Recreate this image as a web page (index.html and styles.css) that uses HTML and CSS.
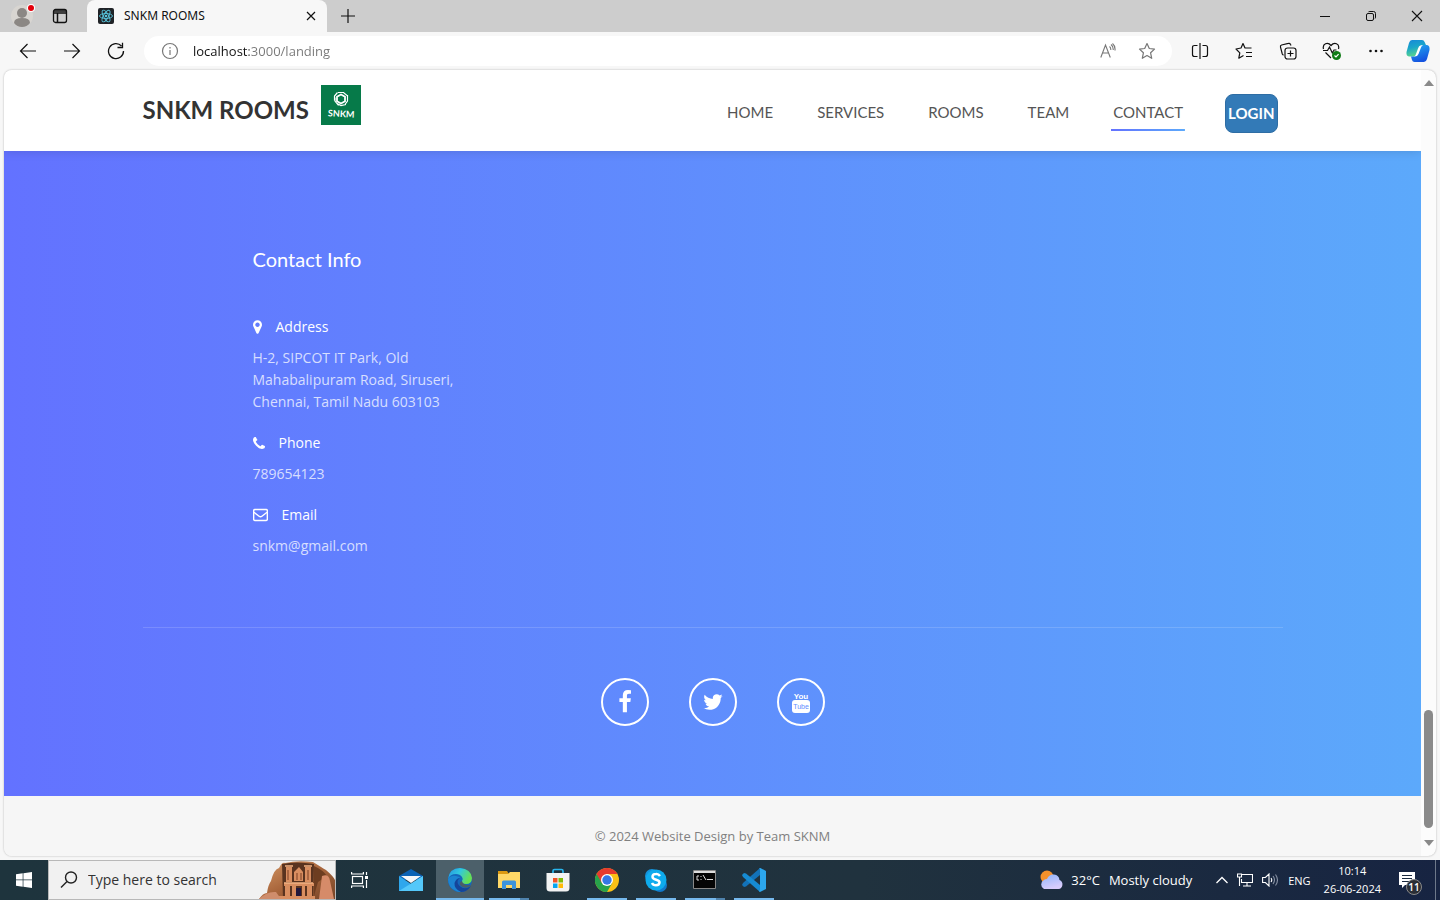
FILE: index.html
```
<!DOCTYPE html>
<html lang="en">
<head>
<meta charset="utf-8">
<title>SNKM ROOMS</title>
<link rel="stylesheet" href="styles.css">
</head>
<body>
<div class="tabbar">
  <button class="icon-btn profile" aria-label="Profile">
    <svg width="26" height="28" viewBox="0 0 26 28"><circle cx="11" cy="14" r="11" fill="#d8d5d1"/><circle cx="11" cy="11" r="5" fill="#8b8784"/><path d="M3 21q0-5 8-5t8 5q-3 4-8 4t-8-4z" fill="#8b8784"/><circle cx="20" cy="6" r="4" fill="#fff"/><circle cx="20" cy="6" r="3" fill="#e3000b"/></svg>
  </button>
  <button class="icon-btn workspaces" aria-label="Tab actions">
    <svg width="16" height="16" viewBox="0 0 16 16" fill="none" stroke="#111" stroke-width="1.3"><rect x="1.500" y="1.500" width="13" height="13" rx="2"/><path d="M2 3h12M5.500 5v9M2 5h12" stroke-width="1.500"/></svg>
  </button>
  <div class="tab">
    <svg width="16" height="16" viewBox="0 0 16 16"><rect width="16" height="16" rx="2" fill="#202327"/><g fill="none" stroke="#58c4dc" stroke-width=".9"><ellipse cx="8" cy="8" rx="6.500" ry="2.500"/><ellipse cx="8" cy="8" rx="6.500" ry="2.500" transform="rotate(60 8 8)"/><ellipse cx="8" cy="8" rx="6.500" ry="2.500" transform="rotate(120 8 8)"/></g><circle cx="8" cy="8" r="1.300" fill="#58c4dc"/></svg>
    <span class="tab-title">SNKM ROOMS</span>
    <button class="icon-btn" aria-label="Close tab"><svg width="10" height="10" viewBox="0 0 10 10" stroke="#111" stroke-width="1.200"><path d="M1 1l8 8M9 1L1 9"/></svg></button>
  </div>
  <button class="icon-btn new-tab" aria-label="New tab"><svg width="14" height="14" viewBox="0 0 14 14" stroke="#111" stroke-width="1.200"><path d="M7 0v14M0 7h14"/></svg></button>
  <div class="window-controls">
    <button class="icon-btn" aria-label="Minimize"><svg width="10" height="10" viewBox="0 0 10 10" stroke="#111"><path d="M0 5.500h10"/></svg></button>
    <button class="icon-btn" aria-label="Restore"><svg width="10" height="10" viewBox="0 0 10 10" fill="none" stroke="#111"><rect x=".5" y="2.500" width="7" height="7" rx="1.500"/><path d="M2.500 .8Q3 .5 4 .5h3.500q2 0 2 2V6q0 1-.4 1.500"/></svg></button>
    <button class="icon-btn" aria-label="Close"><svg width="12" height="12" viewBox="0 0 12 12" stroke="#111" stroke-width="1.100"><path d="M1 1l10 10M11 1L1 11"/></svg></button>
  </div>
</div>

<div class="toolbar">
  <div class="history">
    <button class="icon-btn" aria-label="Back"><svg width="18" height="16" viewBox="0 0 18 16" fill="none" stroke="#111" stroke-width="1.200"><path d="M17 8H1.500M8.500 1l-7 7 7 7"/></svg></button>
    <button class="icon-btn" aria-label="Forward"><svg width="18" height="16" viewBox="0 0 18 16" fill="none" stroke="#111" stroke-width="1.200"><path d="M1 8h15.500M9.500 1l7 7-7 7"/></svg></button>
    <button class="icon-btn" aria-label="Refresh"><svg width="18" height="18" viewBox="0 0 18 18" fill="none" stroke="#111" stroke-width="1.300"><path d="M16.500 9A7.500 7.500 0 1 1 14.500 4M15.500 .8V5.500H10.500"/></svg></button>
  </div>
  <div class="address-bar">
    <svg width="18" height="18" viewBox="0 0 18 18" fill="none" stroke="#777" stroke-width="1.200"><circle cx="9" cy="9" r="7.500"/><path d="M9 8v5M9 5v1.400"/></svg>
    <input class="url" type="text" aria-label="Address" value="localhost:3000/landing">
    <button class="icon-btn" aria-label="Read aloud"><svg width="16" height="16" viewBox="0 0 16 16" fill="none" stroke="#777" stroke-width="1.100"><path d="M.8 14.500L5.500 2l4.800 12.500M2.500 10h6.200M9.500 3.500q1.500 1.200 1.300 3.500M11 1.500q2.500 2 2.200 5.500M12.500 .5q3 2.500 2.500 7"/></svg></button>
    <button class="icon-btn" aria-label="Favorite"><svg width="18" height="18" viewBox="0 0 18 18" fill="none" stroke="#777" stroke-width="1.200" stroke-linejoin="round"><path d="M9 1.500l2.300 5 5.200.6-3.900 3.700 1.100 5.500L9 13.600l-4.700 2.700 1.100-5.500L1.500 7.100l5.200-.6z"/></svg></button>
  </div>
  <div class="tools">
    <button class="icon-btn" aria-label="Split screen"><svg width="18" height="18" viewBox="0 0 18 18" fill="none" stroke="#111" stroke-width="1.200"><path d="M9 1v16M6.500 3.500H3.500q-2 0-2 2v7q0 2 2 2h3M11.500 3.500h3q2 0 2 2v7q0 2-2 2h-3"/></svg></button>
    <button class="icon-btn" aria-label="Favorites"><svg width="18" height="18" viewBox="0 0 18 18" fill="none" stroke="#111" stroke-width="1.200" stroke-linejoin="round"><path d="M16.500 6H10L8 1.500 6 6 1 7l3.800 3.800-1 5.400L8.500 13.500M11 10.500h6M11 14.500h6"/></svg></button>
    <button class="icon-btn" aria-label="Collections"><svg width="18" height="18" viewBox="0 0 18 18" fill="none" stroke="#111" stroke-width="1.200"><rect x="6" y="6" width="11" height="11" rx="2.500"/><path d="M11.500 8.500v6M8.500 11.500h6M12 3.500l-.6-1.200q-.6-1.300-2-.9L2.600 3Q1 3.500 1.500 5.200L3.300 12q.4 1 1.400 1"/></svg></button>
    <button class="icon-btn" aria-label="Browser essentials"><svg width="20" height="18" viewBox="0 0 20 18" fill="none" stroke="#111" stroke-width="1.200"><path d="M1.500 7q-1-4 2-5.300T9 3.500q2.500-3 5.500-1.800T16.500 7M3.500 10.500L9 16M1 8.500h4.500L7.500 5l2.800 6 1.700-3h2.500"/><circle cx="14.500" cy="13.500" r="4.500" fill="#0f7b16" stroke="none"/><path d="M12.500 13.500l1.500 1.500 2.600-2.800" stroke="#fff"/></svg></button>
    <button class="icon-btn" aria-label="Settings and more"><svg width="18" height="18" viewBox="0 0 18 18" fill="#111"><circle cx="3.500" cy="9" r="1.300"/><circle cx="9" cy="9" r="1.300"/><circle cx="14.500" cy="9" r="1.300"/></svg></button>
  </div>
  <button class="icon-btn copilot" aria-label="Copilot">
    <svg width="24" height="24" viewBox="0 0 24 24"><defs><linearGradient id="cpa" x2=".3" y2="1"><stop stop-color="#1687d9"/><stop offset=".5" stop-color="#1aa6c9"/><stop offset="1" stop-color="#58d58e"/></linearGradient><linearGradient id="cpb" x2=".4" y2="1"><stop stop-color="#23aef0"/><stop offset="1" stop-color="#1554e0"/></linearGradient></defs><path d="M6 1h10q2 0 2.600 2l1.400 3h-3q-2.500 0-3.300 2.500L11 15q-.8 2.500-3 2.500H3Q0 17 .5 13L3 4q.8-3 3-3z" fill="url(#cpa)"/><path d="M18 23H8.500q-2 0-2.500-2l-1-3.500h3q2.200 0 3-2.500l2.700-6.500Q14.500 6 17 6h4q3 .5 2.500 5L21 20q-.8 3-3 3z" fill="url(#cpb)"/><path d="M14.500 6.500q-1.500 0-2.500 3L9.600 16q-.6 1-1.600 1.500 3.500.2 4.500-2.500L15 8.500q.6-1.700 2-2.500z" fill="#fff"/></svg>
  </button>
</div>

<div class="viewport">
  <div class="page">
    <header class="site-header">
      <div class="container header-row">
        <a class="brand" href="#home"><span class="brand-name">SNKM ROOMS</span>
          <svg width="40" height="40" viewBox="0 0 40 40"><rect width="40" height="40" fill="#067a49"/><g fill="none" stroke="#fff"><path d="M20 9.500l4 2.200v4.600l-4 2.200-4-2.200v-4.600z" stroke-width="1.800"/><path d="M17 7.500h5.500l3.500 3M26.500 10v6l-2.500 3.500M25 19.500l-5 1-4-2M17.500 20.500L14 16v-3.500M13.500 15.500V11l3-3.500" stroke-width="1.200"/></g><text x="7" y="32" font-family="Lato, sans-serif" font-weight="700" font-size="9" fill="#fff" transform="rotate(3 20 28)">SNKM</text></svg>
        </a>
        <nav class="site-nav">
          <a href="#home">HOME</a>
          <a href="#services">SERVICES</a>
          <a href="#rooms">ROOMS</a>
          <a href="#team">TEAM</a>
          <a class="active" href="#contact">CONTACT</a>
          <button class="login">LOGIN</button>
        </nav>
      </div>
    </header>
    <main class="contact" id="contact">
      <div class="container">
        <section class="contact-info">
          <h3>Contact Info</h3>
          <h4><svg width="9" height="14" viewBox="384 128 1024 1536" fill="#fff"><path d="M1152 640q0-106-75-181t-181-75-181 75-75 181 75 181 181 75 181-75 75-181zm256 0q0 109-33 179l-364 774q-16 33-47.500 52t-67.500 19-67.500-19-46.500-52l-365-774q-33-70-33-179 0-212 150-362t362-150 362 150 150 362z"/></svg>Address</h4>
          <p>H-2, SIPCOT IT Park, Old<br>Mahabalipuram Road, Siruseri,<br>Chennai, Tamil Nadu 603103</p>
          <h4><svg width="12" height="12" viewBox="192 128 1408 1408" fill="#fff"><path d="M1600 1240q0 27-10 70.500t-21 68.500q-21 50-122 106-94 51-186 51-27 0-53-3.500t-57.500-12.500-47-14.500-55.500-20.500-49-18q-98-35-175-83-127-79-264-216t-216-264q-48-77-83-175-3-9-18-49t-20.500-55.500-14.500-47-12.500-57.500-3.500-53q0-92 51-186 56-101 106-122 25-11 68.500-21t70.500-10q14 0 21 3 18 6 53 76 11 19 30 54t35 63.500 31 53.500q3 4 17.500 25t21.500 35.500 7 28.500q0 20-28.500 50t-62 55-62 53-28.500 46q0 9 5 22.500t8.500 20.500 14 24 11.500 19q76 137 174 235t235 174q2 1 19 11.500t24 14 20.500 8.500 22.500 5q18 0 46-28.500t53-62 55-62 50-28.500q14 0 28.500 7t35.500 21.500 25 17.500q25 15 53.500 31t63.500 35 54 30q70 35 76 53 3 7 3 21z"/></svg>Phone</h4>
          <p>789654123</p>
          <h4><svg width="15" height="14" viewBox="0 0 16 14" fill="none" stroke="#fff" stroke-width="1.500"><rect x=".7" y="1.200" width="14.600" height="11.600" rx="1.200"/><path d="M1 4l5.500 4.300q1.500 1.200 3 0L15 4"/></svg>Email</h4>
          <p>snkm@gmail.com</p>
        </section>
        <div class="social">
          <a href="#facebook" aria-label="Facebook"><svg width="24" height="24" viewBox="0 0 1792 1792" fill="#fff"><path d="M1343 12v264h-157q-86 0-116 36t-30 108v189h293l-39 296h-254v759h-306v-759h-255v-296h255v-218q0-186 104-288.500t277-102.500q147 0 228 12z"/></svg></a>
          <a href="#twitter" aria-label="Twitter"><svg width="22" height="22" viewBox="0 0 1792 1792" fill="#fff"><path d="M1684 408q-67 98-162 167 1 14 1 42 0 130-38 259.500t-115.500 248.500-184.500 210.500-258 146-323 54.500q-271 0-496-145 35 4 78 4 225 0 401-138-105-2-188-64.500t-114-159.500q33 5 61 5 43 0 85-11-112-23-185.500-111.500t-73.500-205.500v-4q68 38 146 41-66-44-105-115t-39-154q0-88 44-163 121 149 294.500 238.500t371.500 99.500q-8-38-8-74 0-134 94.500-228.500t228.500-94.500q140 0 236 102 109-21 205-78-37 115-142 178 93-10 186-50z"/></svg></a>
          <a href="#youtube" aria-label="YouTube"><svg width="20" height="24" viewBox="0 0 20 24" font-family="'Liberation Sans', sans-serif" text-anchor="middle"><text x="10" y="9" font-size="8" font-weight="700" fill="#fff">You</text><rect x="1" y="10" width="18" height="13" rx="3" fill="#fff"/><text x="10" y="19" font-size="7" fill="#5f8fff">Tube</text></svg></a>
        </div>
      </div>
    </main>
    <footer class="site-footer">© 2024 Website Design by Team SKNM</footer>
  </div>
  <div class="scrollbar">
    <svg width="10" height="6" viewBox="0 0 10 6" fill="#8a8a8a"><path d="M5 0l5 6H0z"/></svg>
    <div class="track"><div class="thumb"></div></div>
    <svg width="10" height="6" viewBox="0 0 10 6" fill="#8a8a8a"><path d="M5 6L0 0h10z"/></svg>
  </div>
</div>

<div class="taskbar">
  <button class="icon-btn task" aria-label="Start"><svg width="16" height="16" viewBox="0 0 16 16" fill="#fff"><path d="M0 2.300L6.700 1.300V7.600H0zM7.400 1.200L16 0V7.600H7.400zM0 8.300h6.700v6.400L0 13.800zM7.400 8.300H16V16l-8.600-1.200z"/></svg></button>
  <div class="search">
    <svg width="18" height="18" viewBox="0 0 18 18" fill="none" stroke="#222" stroke-width="1.400"><circle cx="11" cy="6.500" r="5.500"/><path d="M7 10.500L1 16.500"/></svg>
    <input type="text" aria-label="Search" placeholder="Type here to search">
    <svg class="art" width="76" height="38" viewBox="0 0 76 38"><defs><linearGradient id="rock" x2="1" y2="1"><stop stop-color="#d69a68"/><stop offset=".5" stop-color="#a9663c"/><stop offset="1" stop-color="#744326"/></linearGradient></defs><path d="M0 38q4-6 8-6 1-8 4-12 3-12 8-13 3-6 6-5 12-3 28-1 8 5 13 8 7 6 9 10v19z" fill="url(#rock)"/><path d="M23 3q14-3 32 0l-1 35H24z" fill="#59331f"/><path d="M55 5q9 4 13 10l-9 6-4 14z" fill="#6d3d20"/><path d="M63 15q7-3 8 5l4 18H60z" fill="#d68b69"/><g fill="#d98e60"><path d="M27 6h6v15h-6zM46 6h6v15h-6zM35 11l5-5 4 5v9h-9zM25 22h30v3H25zM26 25h5v11h-5zM33 25h4v11h-4zM43 25h3v11h-3zM48 25h5v11h-5zM20 35h36v3H20z"/></g><path d="M29 9v10M49 9v10M38 12v7M42 12v7" stroke="#8b4c2d" stroke-width="1.200"/><path d="M25 22h29M26 5h8M45 5h8" stroke="#f2b383" stroke-width="1.500"/><path d="M37 27h5v8h-5z" fill="#21183c"/><path d="M0 38q8-8 17-7l5 7z" fill="#cf8d6c"/></svg>
  </div>
  <button class="icon-btn task" aria-label="Task view"><svg width="18" height="16" viewBox="0 0 18 16" fill="none" stroke="#fff" stroke-width="1.200"><rect x="1.500" y="4.500" width="10" height="7"/><path d="M.6 0v2h11.800V0M.6 16v-2h11.800v2M15.500 0v3M15.500 8v8"/><path d="M14 4h3v3h-3z" fill="#fff" stroke="none"/></svg></button>
  <div class="apps">
    <button class="icon-btn task" aria-label="Mail"><svg width="24" height="24" viewBox="0 0 24 24"><path d="M0 8L12 1l12 7v4H0z" fill="#0b62b5"/><path d="M0 8l12 8L24 8v15H0z" fill="#2fa7ec"/><path d="M0 23L24 8v15z" fill="#54c8fa"/><path d="M2 8h20l-10 7z" fill="#f5f6f8"/></svg></button>
    <button class="icon-btn task running current" aria-label="Edge"><svg width="24" height="24" viewBox="0 0 24 24"><defs><linearGradient id="edge" x2="1" y2=".4"><stop stop-color="#2692e2"/><stop offset=".5" stop-color="#31c8df"/><stop offset="1" stop-color="#67e054"/></linearGradient></defs><circle cx="12" cy="12" r="12" fill="#1467bc"/><path d="M0 11Q1.500 0 12 0q11 1 12 10-.2 6-6 6-5 0-4-3 1.500-2 0-4Q12 6 8 6 2 6 0 11z" fill="url(#edge)"/><path d="M0 11q3-4 8-3 3 .5 4.500 2Q8 10 8 14q1 7 9 9-4 1.500-8 .6Q0 20 0 11z" fill="#1c84d2"/><path d="M12 10q-3.500 2-2 6 3 5 9 4 3-1 4-2-4 6-10 6-7-3-6.500-9Q8 10.500 12 10z" fill="#15459a"/><path d="M14 13q1 5 9 4l-2 2q-6 2-9-2-1-3 2-4z" fill="#4a5d68"/></svg></button>
    <button class="icon-btn task running stacked" aria-label="File Explorer"><svg width="22" height="20" viewBox="0 0 22 20"><path d="M0 1h9l2 3H0z" fill="#dc9a12"/><path d="M0 4h10l2-2h10v16H0z" fill="#ffd867"/><path d="M4 19v-7q0-1.500 1.500-1.500h11Q18 10.500 18 12v7h-4v-4H8v4z" fill="#3d94dc"/></svg></button>
    <button class="icon-btn task" aria-label="Microsoft Store"><svg width="24" height="24" viewBox="0 0 24 24"><path d="M7 6V3q0-1.500 1.500-1.500h7Q17 1.500 17 3v3" fill="none" stroke="#28b6ee" stroke-width="1.700"/><path d="M.5 5h23v15q0 3.500-3.500 3.500H4Q.5 23.500.5 20z" fill="#f3f3f3"/><path d="M7 10h4.500v4.500H7z" fill="#f35325"/><path d="M12.500 10H17v4.500h-4.500z" fill="#81bc06"/><path d="M7 15.500h4.500V20H7z" fill="#05a6f0"/><path d="M12.500 15.500H17V20h-4.500z" fill="#ffba08"/></svg></button>
    <button class="icon-btn task running" aria-label="Chrome"><svg width="24" height="24" viewBox="0 0 24 24"><circle cx="12" cy="12" r="12" fill="#fbc116"/><path d="M12 12L1.600 6A12 12 0 0 0 12 24l5.200-9z" fill="#27a34b"/><path d="M1.600 6A12 12 0 0 1 22.400 6H12l-5.200 9z" fill="#e63b2e"/><circle cx="12" cy="12" r="6" fill="#fff"/><circle cx="12" cy="12" r="4.700" fill="#3478e5"/></svg></button>
    <button class="icon-btn task running" aria-label="Skype"><svg width="24" height="24" viewBox="0 0 24 24"><circle cx="8" cy="8" r="7" fill="#1593dc"/><circle cx="16" cy="17" r="7" fill="#1179cb"/><circle cx="12" cy="12" r="10.500" fill="#0eabed"/><path d="M16 8q-1.500-2.200-4-2-3.500 0-3.500 2.700c0 4 7 2 7 5.600q0 3-3.600 3Q9 17.300 8 15" fill="none" stroke="#fff" stroke-width="2.500"/></svg></button>
    <button class="icon-btn task running stacked" aria-label="Command Prompt"><svg width="24" height="20" viewBox="0 0 24 20"><path d="M.5 .5h22v18H.5z" fill="#050505" stroke="#888"/><path d="M1 1h21v2H1z" fill="#ddd"/><path d="M6 6H4v4h2M8 6v1M8 9v1M10 5l3 5M14 9.500h6" fill="none" stroke="#ddd"/></svg></button>
    <button class="icon-btn task running" aria-label="Visual Studio Code"><svg width="24" height="24" viewBox="0 0 24 24"><path d="M18 0L1 15l-1 2 2 2 2-.5L18 7z" fill="#1372b8"/><path d="M18 24L1 9 0 7l2-2 2 .5L18 17z" fill="#168bd2"/><path d="M17 0l1-.2L24 3v18l-6 3-1-1 1-1V1z" fill="#2ca7ee"/></svg></button>
  </div>
  <div class="tray">
    <button class="icon-btn weather"><svg width="24" height="20" viewBox="0 0 24 20"><defs><linearGradient id="cloud" x2=".4" y2="1"><stop stop-color="#8fb5fa"/><stop offset="1" stop-color="#d8ccfc"/></linearGradient></defs><circle cx="8" cy="7" r="6.500" fill="#f4912c"/><path d="M5 19a5 5 0 0 1 0-9q1-1 3-1 2-5 7-4.500 5 .5 5.500 5.500a4.700 4.700 0 0 1-1 9z" fill="url(#cloud)"/></svg><span>32°C</span><span>Mostly cloudy</span></button>
    <button class="icon-btn" aria-label="Show hidden icons"><svg width="12" height="8" viewBox="0 0 12 8" fill="none" stroke="#fff" stroke-width="1.300"><path d="M.5 7L6 1.500 11.500 7"/></svg></button>
    <button class="icon-btn" aria-label="Network"><svg width="16" height="14" viewBox="0 0 16 14" fill="none" stroke="#fff" stroke-width="1.100"><path d="M5 1.500h10.500v8H4.500V6M10 10v3M6 13h8M.5 1h4v3h-4zM2.500 4v9"/></svg></button>
    <button class="icon-btn" aria-label="Volume"><svg width="17" height="14" viewBox="0 0 17 14" fill="none" stroke="#fff" stroke-width="1.100"><path d="M.6 4.500h2.800L7 1v12L3.400 9.500H.6zM9 5q1.500 2 0 4"/><path d="M11 3q3 4 0 8M13.500 1.500q4 5.500 0 11" stroke="#8993a5"/></svg></button>
    <button class="icon-btn lang">ENG</button>
    <button class="icon-btn clock"><span>10:14</span><span>26-06-2024</span></button>
    <button class="icon-btn notices" aria-label="Notifications"><svg width="16" height="16" viewBox="0 0 16 16"><path d="M0 0h16v13H6l-3 3v-3H0z" fill="#fff"/><path d="M3 3.500h10M3 6.500h10M3 9.500h7" stroke="#1b2a3f"/></svg><span class="badge">11</span></button>
  </div>
</div>
</body>
</html>
```
FILE: styles.css
```
* { box-sizing: border-box; }

body {
  margin: 0;
  height: 100vh;
  display: flex;
  flex-direction: column;
  overflow: hidden;
  background: #f7f7f7;
  font-family: "Open Sans", "Noto Sans", sans-serif;
}

svg { display: block; flex: none; }
h3, h4, p { margin: 0; }
a { color: inherit; text-decoration: none; }

.icon-btn {
  display: flex;
  align-items: center;
  justify-content: center;
  flex: none;
  padding: 0;
  border: 0;
  background: none;
  color: inherit;
  font: inherit;
}

/* Browser tabs */
.tabbar {
  display: flex;
  flex: none;
  height: 32px;
  background: #cdcdcd;
}
.profile { width: 48px; }
.workspaces { width: 24px; }
.tab {
  display: flex;
  align-items: center;
  gap: 10px;
  width: 240px;
  margin-left: 15px;
  padding: 0 11px;
  border-radius: 8px 8px 0 0;
  background: #f7f7f7;
  font: 12px/16px "Noto Sans", sans-serif;
  font-size: 12px;
  color: #111;
}
.tab-title { flex: 1; }
.new-tab { width: 42px; }
.window-controls { display: flex; margin-left: auto; }
.window-controls .icon-btn { width: 46px; }

/* Browser toolbar */
.toolbar {
  display: flex;
  align-items: center;
  flex: none;
  height: 38px;
}
.history { display: flex; padding-left: 6px; }
.history .icon-btn, .tools .icon-btn { width: 44px; }
.address-bar {
  display: flex;
  align-items: center;
  flex: 1;
  height: 30px;
  margin-left: 6px;
  padding: 0 16px 0 17px;
  border-radius: 15px;
  background: #fff;
}
.address-bar .icon-btn { margin-left: 22px; }
.url {
  flex: 1;
  min-width: 0;
  padding: 0;
  margin-left: 14px;
  border: 0;
  outline: 0;
  font: 13px/20px "Open Sans", sans-serif;
  color: transparent;
  background: linear-gradient(to right, #111 56px, #777 56px);
  -webkit-background-clip: text;
  background-clip: text;
}
.tools { display: flex; padding-left: 6px; }
.copilot { width: 42px; padding-right: 2px; }

/* Browser viewport */
.viewport {
  display: flex;
  flex: 1;
  min-height: 0;
  margin: 0 4px 4px;
  border-radius: 8px;
  overflow: hidden;
  background: #fcfcfc;
  box-shadow: 0 0 2px #aaa;
}
.page {
  display: flex;
  flex-direction: column;
  flex: 1;
  min-width: 0;
  overflow: hidden;
}
.container {
  width: 100%;
  max-width: 1140px;
  margin: 0 auto;
}
.scrollbar {
  display: flex;
  flex-direction: column;
  align-items: center;
  width: 15px;
  padding: 10px 0;
}
.track {
  display: flex;
  align-items: flex-end;
  flex: 1;
  padding: 12px 0;
}
.thumb {
  width: 9px;
  height: 118px;
  border-radius: 5px;
  background: #8a8a8a;
}

/* Site header */
.site-header {
  flex: none;
  height: 81px;
  background: #fff;
  box-shadow: 0 0 10px rgba(0, 0, 0, 0.15);
  z-index: 1;
}
.header-row {
  display: flex;
  align-items: flex-start;
  justify-content: space-between;
}
.brand {
  display: flex;
  align-items: flex-start;
  gap: 12px;
  padding-top: 15px;
  color: #333;
  font: 700 24px/40px Lato, sans-serif;
}
.brand-name { padding-top: 5px; }
.site-nav {
  display: flex;
  align-items: flex-start;
  gap: 40px;
  padding: 24px 5px 0 0;
  color: #555;
  font: 400 15px/37px Lato, sans-serif;
}
.site-nav a { padding: 0 2px; }
.site-nav .active {
  background: linear-gradient(to right, #6372ff, #5ca9fb) bottom / 100% 2px no-repeat;
}
.login {
  height: 39px;
  padding: 0 2px;
  border: 1px solid #2e6da4;
  border-radius: 8px;
  background: #337ab7;
  color: #fff;
  font: 700 15px/37px Lato, sans-serif;
}

/* Contact section */
.contact {
  flex: 1;
  padding-top: 92px;
  background: linear-gradient(to right, #6372ff, #5ca9fb);
  color: #fff;
}
.contact-info {
  padding: 0 110px 70px;
  border-bottom: 1px solid rgba(255, 255, 255, 0.15);
}
.contact-info h3 {
  margin-bottom: 42px;
  font: 400 20px/32px Lato, sans-serif;
}
.contact-info h4 {
  display: flex;
  align-items: center;
  gap: 14px;
  margin-bottom: 10px;
  font-size: 14px;
  font-weight: 400;
  line-height: 20px;
}
.contact-info p {
  margin-bottom: 20px;
  color: rgba(255, 255, 255, 0.75);
  font-size: 14px;
  line-height: 22px;
}
.contact-info p:last-child { margin-bottom: 0; }
.social {
  display: flex;
  justify-content: center;
  gap: 40px;
  padding-top: 50px;
}
.social a {
  display: flex;
  align-items: center;
  justify-content: center;
  width: 48px;
  height: 48px;
  border: 2px solid #fff;
  border-radius: 50%;
}
.site-footer {
  flex: none;
  height: 60px;
  padding-top: 30px;
  background: #f6f6f6;
  color: #808080;
  font-size: 13px;
  line-height: 20px;
  text-align: center;
}

/* Taskbar */
.taskbar {
  display: flex;
  flex: none;
  height: 40px;
  background: linear-gradient(to right, #1e343d, #20323e 60%, #1a2940 85%, #172442);
  color: #fff;
}
.task { width: 48px; height: 40px; }
.search {
  display: flex;
  align-items: center;
  width: 288px;
  padding-left: 11px;
  border: 1px solid #b8b8b8;
  background: #f1f1f1;
}
.search input {
  flex: 1;
  min-width: 0;
  padding: 0 0 0 10px;
  border: 0;
  outline: 0;
  background: none;
  font: 14px/20px "Open Sans", sans-serif;
}
.search input::placeholder { color: #333; }
.apps { display: flex; gap: 1px; padding-left: 3px; }
.running { background: linear-gradient(#76b9ed, #76b9ed) bottom / 40px 2px no-repeat; }
.current { background-color: #4c606a; background-size: 100% 2px; }
.stacked { background-image: linear-gradient(to right, #76b9ed 31px, #4f83ad 31px); }
.tray {
  display: flex;
  gap: 9px;
  margin-left: auto;
  margin-right: 4px;
  padding-right: 20px;
  border-right: 1px solid #6d788a;
}
.weather { gap: 9px; margin-right: 15px; font-size: 13px; }
.weather svg { margin-right: -1px; }
.lang { font-size: 11px; }
.clock {
  flex-direction: column;
  margin: 0 9px 0 4px;
  font-size: 11px;
  line-height: 18px;
}
.notices { position: relative; }
.badge {
  position: absolute;
  left: 7px;
  top: 19px;
  width: 16px;
  height: 16px;
  border: 1px solid #8a8a8a;
  border-radius: 50%;
  background: #2a2e35;
  font-size: 10px;
  font-weight: 600;
  line-height: 14px;
}
```
